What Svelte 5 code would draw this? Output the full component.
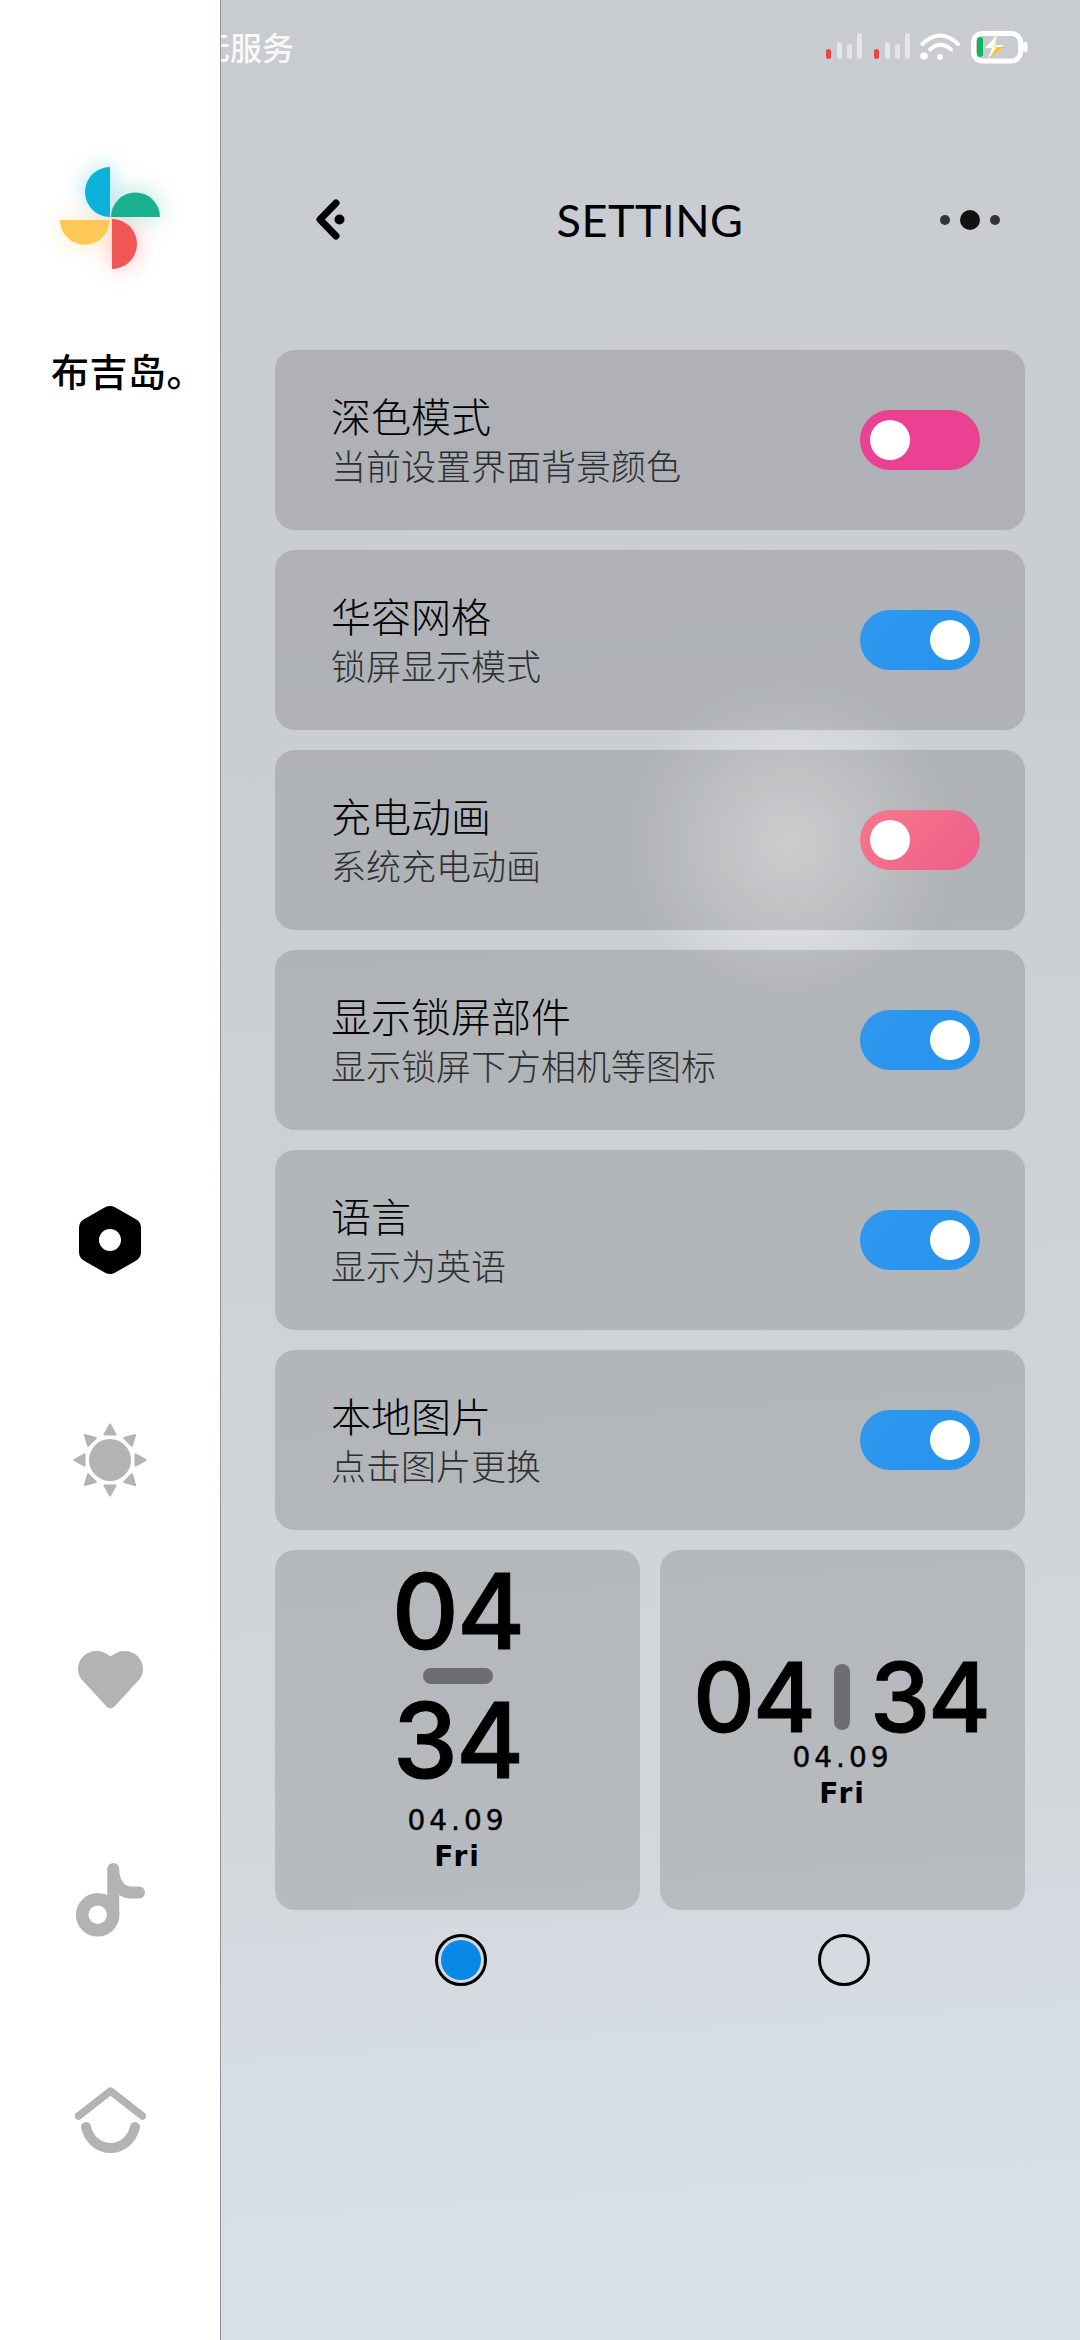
<script>
	const rows = [
		{ title: '深色模式', sub: '当前设置界面背景颜色', tone: 'pink', on: false },
		{ title: '华容网格', sub: '锁屏显示模式', tone: 'blue', on: true },
		{ title: '充电动画', sub: '系统充电动画', tone: 'rose', on: false },
		{ title: '显示锁屏部件', sub: '显示锁屏下方相机等图标', tone: 'blue', on: true },
		{ title: '语言', sub: '显示为英语', tone: 'blue', on: true },
		{ title: '本地图片', sub: '点击图片更换', tone: 'blue', on: true }
	];
	const rays = [0, 45, 90, 135, 180, 225, 270, 315];
</script>

<div class="screen">
	<aside class="sidebar">
		<svg class="logo" viewBox="30 140 160 160" width="160" height="160" aria-hidden="true">
			<defs>
				<filter id="glow" x="-60%" y="-60%" width="220%" height="220%">
					<feGaussianBlur stdDeviation="12" />
				</filter>
			</defs>
			<g filter="url(#glow)" opacity="0.4">
				<path d="M110 167a25 25 0 0 0 0 50z" fill="#0ab2d8" />
				<path d="M111 217a24.500 24.500 0 0 1 49 0z" fill="#19b18f" />
				<path d="M60 220a24.750 24.750 0 0 0 49.500 0z" fill="#fec857" />
				<path d="M112 219a25 25 0 0 1 0 50z" fill="#f15656" />
			</g>
			<path d="M110 167a25 25 0 0 0 0 50z" fill="#0ab2d8" />
			<path d="M111 217a24.500 24.500 0 0 1 49 0z" fill="#19b18f" />
			<path d="M60 220a24.750 24.750 0 0 0 49.500 0z" fill="#fec857" />
			<path d="M112 219a25 25 0 0 1 0 50z" fill="#f15656" />
		</svg>
		<div class="brand">布吉岛。</div>

		<nav class="nav">
			<div class="nav-item">
				<svg viewBox="-34 -36 68 72" width="68" height="72" aria-hidden="true">
					<path
						d="M0-24 21-12V12L0 24-21 12V-12Z"
						fill="#000"
						stroke="#000"
						stroke-width="20"
						stroke-linejoin="round"
					/>
					<circle r="11" fill="#fff" />
				</svg>
			</div>
			<div class="nav-item">
				<svg viewBox="-38 -38 76 76" width="76" height="76" aria-hidden="true">
					<circle r="21" fill="#b3b3b3" />
					{#each rays as angle}
						<path
							d="M-5.500-25.500H5.500L0-35.500Z"
							transform="rotate({angle})"
							fill="#b3b3b3"
							stroke="#b3b3b3"
							stroke-width="2"
							stroke-linejoin="round"
						/>
					{/each}
				</svg>
			</div>
			<div class="nav-item">
				<svg viewBox="0 0 65 58" width="65" height="58" aria-hidden="true">
					<path
						d="M32.500 5.500C28 2 24 0 18.500 0 8 0 0 8 0 18 0 23.500 2 27 6 31L28.500 55.500C31 58 34 58 36.500 55.500L59 31C63 27 65 23.500 65 18 65 8 57 0 46.500 0 41 0 37 2 32.500 5.500Z"
						fill="#b3b3b3"
					/>
				</svg>
			</div>
			<div class="nav-item">
				<svg viewBox="0 0 69 74" width="69" height="74" aria-hidden="true">
					<circle cx="21.700" cy="51.800" r="15.500" fill="none" stroke="#b3b3b3" stroke-width="12.500" />
					<path
						d="M37.200 6V51.800M37.200 6C37.200 19 44 29.500 55 29.500H63"
						fill="none"
						stroke="#b3b3b3"
						stroke-width="12"
						stroke-linecap="round"
					/>
				</svg>
			</div>
			<div class="nav-item">
				<svg viewBox="0 0 71 68" width="71" height="68" aria-hidden="true">
					<path
						d="M3.500 30 35.500 5 67.500 30"
						fill="none"
						stroke="#b3b3b3"
						stroke-width="7.500"
						stroke-linecap="round"
						stroke-linejoin="round"
					/>
					<path
						d="M11 41C14 54 24 62 35.500 62 47 62 57 54 60 41"
						fill="none"
						stroke="#b3b3b3"
						stroke-width="10"
						stroke-linecap="round"
					/>
				</svg>
			</div>
		</nav>
	</aside>

	<main class="main">
		<div class="statusbar">
			<span class="carrier">无服务</span>
			<svg class="status-icons" viewBox="826 30 202 36" width="202" height="36" aria-hidden="true">
				<g fill="#e4e6e9">
					<rect x="837" y="42" width="5" height="17" rx="2.500" />
					<rect x="847" y="44" width="5" height="15" rx="2.500" />
					<rect x="857" y="33" width="5" height="26" rx="2.500" />
					<rect x="885" y="42" width="5" height="17" rx="2.500" />
					<rect x="895" y="44" width="5" height="15" rx="2.500" />
					<rect x="905" y="33" width="5" height="26" rx="2.500" />
				</g>
				<rect x="826" y="49" width="5" height="10" rx="2.500" fill="#ee4444" />
				<rect x="874" y="49" width="5" height="10" rx="2.500" fill="#ee4444" />
				<g fill="none" stroke="#fff" stroke-width="4" stroke-linecap="round">
					<path d="M922.500 44Q940 27 958 44" />
					<path d="M930 49.500Q940.500 40 951 49.500" />
				</g>
				<circle cx="924" cy="56" r="3.800" fill="#fff" />
				<circle cx="940" cy="57" r="3" fill="#fff" />
				<rect x="973.500" y="33.500" width="47" height="27.500" rx="9" fill="none" stroke="#fff" stroke-width="5" />
				<rect x="1023" y="42" width="4.500" height="10" rx="2" fill="#fff" />
				<rect x="977" y="37" width="6" height="20" rx="3" fill="#0fb55e" />
				<path d="M997 35 985 48H992L988 58 1004 45H995Z" fill="#fff" />
				<path d="M997 36 993.500 47H1004L990 57 996 48 994 45Z" fill="#fdc41a" />
			</svg>
		</div>

		<header class="topbar">
			<svg class="back" viewBox="0 0 30 42" width="30" height="42" aria-hidden="true">
				<path
					d="M20 4 4 20.500 20 37"
					fill="none"
					stroke="#000"
					stroke-width="7"
					stroke-linecap="round"
					stroke-linejoin="round"
				/>
				<circle cx="23.500" cy="20.500" r="5" fill="#000" />
			</svg>
			<h1>SETTING</h1>
			<div class="more">
				<i class="dot"></i>
				<i class="dot big"></i>
				<i class="dot"></i>
			</div>
		</header>

		<section class="list">
			{#each rows as row}
				<div class="row">
					<div class="labels">
						<div class="title">{row.title}</div>
						<div class="sub">{row.sub}</div>
					</div>
					<div class="toggle {row.tone}" class:on={row.on}>
						<span class="knob"></span>
					</div>
				</div>
			{/each}
		</section>

		<section class="clocks">
			<div class="clock stacked">
				<div class="digits">04</div>
				<div class="bar"></div>
				<div class="digits">34</div>
				<div class="date">04.09</div>
				<div class="day">Fri</div>
			</div>
			<div class="clock inline">
				<div class="time">
					<span class="digits">04</span>
					<span class="bar"></span>
					<span class="digits">34</span>
				</div>
				<div class="date">04.09</div>
				<div class="day">Fri</div>
			</div>
		</section>

		<div class="radios">
			<span class="radio checked"></span>
			<span class="radio"></span>
		</div>
	</main>
</div>

<style>
	:global(body) {
		margin: 0;
	}

	.screen {
		display: flex;
		width: 1080px;
		height: 2340px;
		overflow: hidden;
		font-family: 'Noto Sans CJK SC', 'Noto Sans', sans-serif;
		color: #000;
	}

	.sidebar {
		position: relative;
		z-index: 1;
		flex: 0 0 221px;
		box-sizing: border-box;
		border-right: 1px solid #8e9094;
		background: #fff;
	}

	.logo {
		display: block;
		margin-top: 140px;
		margin-left: 30px;
	}

	.brand {
		margin-top: 40px;
		margin-left: 51px;
		font-size: 38px;
		font-weight: 500;
		line-height: 60px;
		letter-spacing: 0.5px;
		white-space: nowrap;
	}

	.nav {
		margin-top: 730px;
	}

	.nav-item {
		display: flex;
		align-items: center;
		justify-content: center;
		height: 220px;
	}

	.main {
		flex: 1;
		box-sizing: border-box;
		padding: 0 55px 0 54px;
		background:
			radial-gradient(circle 165px at 569px 842px, rgba(255, 255, 255, 0.62), rgba(255, 255, 255, 0.28) 55%, rgba(255, 255, 255, 0) 100%),
			linear-gradient(176deg, #c8cbd0 0, #cbcfd3 900px, #cfd4d7 1500px, #d3d8dd 1900px, #d8dee6 2130px, #d9dfe7 100%);
	}

	.statusbar {
		display: flex;
		align-items: center;
		justify-content: space-between;
		height: 96px;
	}

	.carrier {
		margin-left: -77px;
		margin-top: -4px;
		font-size: 32px;
		font-weight: 500;
		color: rgba(255, 255, 255, 0.9);
		white-space: nowrap;
	}

	.status-icons {
		margin-right: -3px;
	}

	.topbar {
		display: grid;
		grid-template-columns: 1fr auto 1fr;
		align-items: center;
		height: 248px;
		margin-bottom: 6px;
	}

	.back {
		margin-left: 41px;
	}

	h1 {
		margin: 0;
		font-family: Lato, sans-serif;
		font-size: 45px;
		font-weight: 400;
		line-height: 60px;
		letter-spacing: 0.5px;
	}

	.more {
		display: flex;
		align-items: center;
		justify-content: flex-end;
		gap: 10px;
		padding-right: 25px;
	}

	.dot {
		width: 10px;
		height: 10px;
		border-radius: 50%;
		background: #333;
	}

	.dot.big {
		width: 20px;
		height: 20px;
		background: #111;
	}

	.list {
		display: flex;
		flex-direction: column;
		gap: 20px;
	}

	.row {
		display: flex;
		align-items: center;
		justify-content: space-between;
		box-sizing: border-box;
		height: 180px;
		padding: 0 45px 0 56px;
		border-radius: 20px;
		background: rgba(0, 0, 0, 0.135);
	}

	.title {
		font-size: 40px;
		font-weight: 300;
		line-height: 50px;
	}

	.sub {
		font-size: 35px;
		font-weight: 300;
		line-height: 50px;
		color: #2c2f32;
	}

	.toggle {
		display: flex;
		align-items: center;
		box-sizing: border-box;
		width: 120px;
		height: 60px;
		padding: 0 10px;
		border-radius: 30px;
	}

	.toggle.on {
		justify-content: flex-end;
	}

	.pink {
		background: #ea4193;
	}

	.blue {
		background: linear-gradient(135deg, #3098f0, #2592ec);
	}

	.rose {
		background: linear-gradient(135deg, #f57888, #ee5e8c);
	}

	.knob {
		width: 40px;
		height: 40px;
		border-radius: 50%;
		background: #fff;
	}

	.clocks {
		display: grid;
		grid-template-columns: 1fr 1fr;
		gap: 20px;
		margin-top: 20px;
	}

	.clock {
		display: flex;
		flex-direction: column;
		align-items: center;
		box-sizing: border-box;
		height: 360px;
		border-radius: 20px;
		background: rgba(0, 0, 0, 0.135);
	}

	.digits {
		font-family: Inter, sans-serif;
		font-weight: 500;
		color: #000;
		-webkit-text-stroke: 1px #000;
	}

	.date {
		font-family: 'DejaVu Sans', sans-serif;
		font-size: 28px;
		letter-spacing: 4px;
		line-height: 36px;
		-webkit-text-stroke: 0.4px #000;
	}

	.day {
		font-family: 'DejaVu Sans', sans-serif;
		font-size: 28px;
		font-weight: 700;
		letter-spacing: 2px;
		line-height: 36px;
	}

	.stacked {
		padding-top: 18px;
	}

	.stacked .digits {
		font-size: 104px;
		line-height: 86px;
		letter-spacing: -2px;
	}

	.stacked .bar {
		width: 70px;
		height: 16px;
		margin: 14px 0 13px;
		border-radius: 8px;
		background: #6d6e70;
	}

	.stacked .date {
		margin-top: 20px;
	}

	.inline {
		padding-top: 107px;
	}

	.time {
		display: flex;
		align-items: center;
		gap: 20px;
		height: 80px;
		padding-right: 3px;
	}

	.inline .digits {
		font-size: 96px;
		line-height: 80px;
		letter-spacing: -2px;
	}

	.inline .bar {
		width: 16px;
		height: 66px;
		border-radius: 8px;
		background: #6d6e70;
	}

	.inline .date {
		margin-top: 3px;
	}

	.radios {
		display: grid;
		grid-template-columns: 1fr 1fr;
		gap: 20px;
		justify-items: center;
		margin-top: 24px;
		padding-left: 5px;
	}

	.radio {
		box-sizing: border-box;
		width: 52px;
		height: 52px;
		padding: 3px;
		border: 3px solid #000;
		border-radius: 50%;
		background-clip: content-box;
	}

	.radio.checked {
		background-color: #0a88e8;
	}
</style>
